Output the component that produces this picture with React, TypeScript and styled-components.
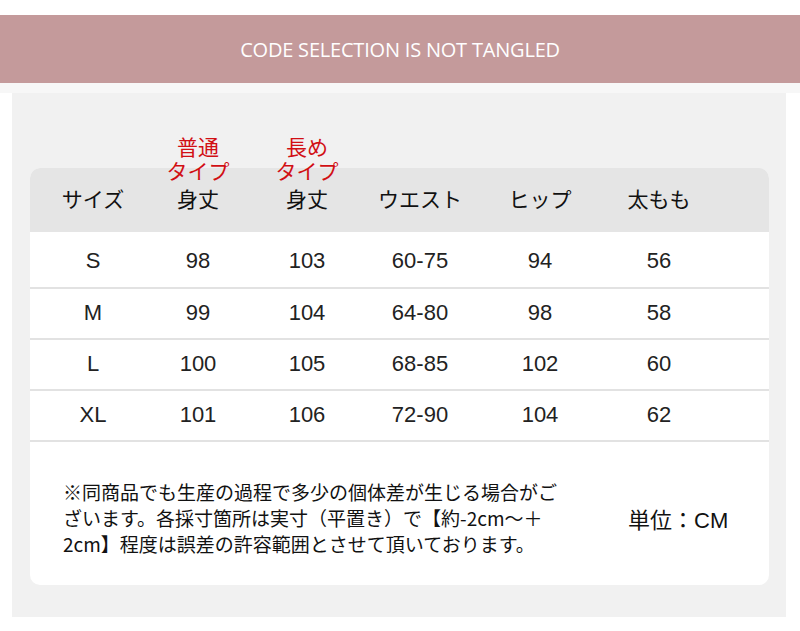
import React from 'react';
import styled, { createGlobalStyle } from 'styled-components';

const GlobalStyle = createGlobalStyle`
  html, body {
    margin: 0;
    padding: 0;
    background: #ffffff;
  }
  body {
    font-family: 'Liberation Sans', 'Noto Sans CJK JP', sans-serif;
  }
`;

const Page = styled.div`
  width: 800px;
  height: 631px;
  padding-top: 15px;
  box-sizing: border-box;
  background: #ffffff;
`;

const Banner = styled.div`
  height: 68px;
  background: #c49a9b;
  display: flex;
  align-items: center;
  justify-content: center;
`;

const BannerText = styled.span`
  font-family: 'Open Sans', sans-serif;
  font-size: 20px;
  color: #ffffff;
  letter-spacing: -0.2px;
`;

const Strip = styled.div`
  height: 10px;
  background: #f7f7f7;
`;

const Panel = styled.div`
  margin: 0 14px 0 12px;
  height: 524px;
  background: #f1f1f1;
  padding: 75px 17px 0 18px;
  box-sizing: border-box;
`;

const Card = styled.div`
  border-radius: 10px;
  background: #ffffff;
`;

const columns = '126px 84px 134px 92px 148px 90px 1fr';

const HeaderRow = styled.div`
  display: grid;
  grid-template-columns: ${columns};
  height: 64px;
  align-items: center;
  background: #e5e5e5;
  border-radius: 10px 10px 0 0;
`;

const HeadCell = styled.div`
  position: relative;
  text-align: center;
  font-family: 'Liberation Sans', 'Noto Sans CJK JP', sans-serif;
  font-size: 21px;
  color: #111111;
  line-height: 24px;
`;

const TypeLabel = styled.div`
  position: absolute;
  left: 0;
  right: 0;
  bottom: calc(100% + 4px);
  text-align: center;
  font-family: 'Liberation Sans', 'Noto Sans CJK JP', sans-serif;
  font-size: 21px;
  line-height: 24px;
  color: #d10f14;
`;

const Row = styled.div`
  display: grid;
  grid-template-columns: ${columns};
  height: 49px;
  align-items: center;
  border-top: 2px solid #e2e2e2;
  &:first-of-type {
    border-top: none;
    height: 55px;
    padding-top: 5px;
    box-sizing: border-box;
  }
`;

const Cell = styled.div`
  text-align: center;
  font-size: 22px;
  color: #222222;
  margin-top: -2px;
`;

const Note = styled.div`
  display: flex;
  align-items: center;
  border-top: 2px solid #e2e2e2;
  height: 145px;
  padding: 8px 0 0 33px;
  box-sizing: border-box;
`;

const NoteText = styled.p`
  margin: 0;
  width: 565px;
  font-family: 'Noto Sans CJK JP', sans-serif;
  font-size: 19px;
  line-height: 26px;
  color: #111111;
`;

const Unit = styled.div`
  font-family: 'Liberation Sans', 'Noto Sans CJK JP', sans-serif;
  font-size: 22px;
  color: #111111;
`;

const headers = [
  { label: 'サイズ' },
  { label: '身丈', type: ['普通', 'タイプ'] },
  { label: '身丈', type: ['長め', 'タイプ'] },
  { label: 'ウエスト' },
  { label: 'ヒップ' },
  { label: '太もも' },
];

const rows = [
  ['S', '98', '103', '60-75', '94', '56'],
  ['M', '99', '104', '64-80', '98', '58'],
  ['L', '100', '105', '68-85', '102', '60'],
  ['XL', '101', '106', '72-90', '104', '62'],
];

export default function App() {
  return (
    <Page>
      <GlobalStyle />
      <Banner>
        <BannerText>CODE SELECTION IS NOT TANGLED</BannerText>
      </Banner>
      <Strip />
      <Panel>
        <Card>
          <HeaderRow>
            {headers.map((h, i) => (
              <HeadCell key={i}>
                {h.type && (
                  <TypeLabel>
                    {h.type[0]}
                    <br />
                    {h.type[1]}
                  </TypeLabel>
                )}
                {h.label}
              </HeadCell>
            ))}
          </HeaderRow>
          <div>
            {rows.map((r, i) => (
              <Row key={i}>
                {r.map((v, j) => (
                  <Cell key={j}>{v}</Cell>
                ))}
              </Row>
            ))}
          </div>
          <Note>
            <NoteText>
              ※同商品でも生産の過程で多少の個体差が生じる場合がご
              <br />
              ざいます。各採寸箇所は実寸（平置き）で【約-2cm～＋
              <br />
              2cm】程度は誤差の許容範囲とさせて頂いております。
            </NoteText>
            <Unit>単位：CM</Unit>
          </Note>
        </Card>
      </Panel>
    </Page>
  );
}
